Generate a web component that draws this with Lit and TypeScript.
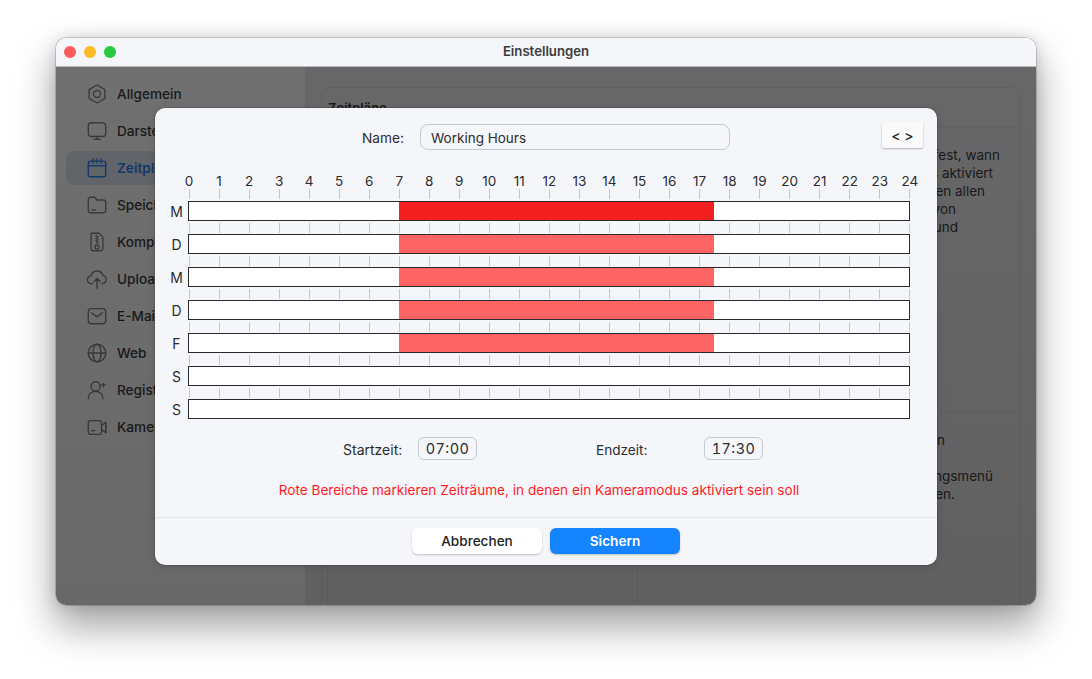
import { LitElement, html, css, svg } from "lit";
import { customElement } from "lit/decorators.js";

const ICONS: Record<string, unknown> = {
  general: svg`<path d="M12 2.2l8.6 5v9.6L12 21.8l-8.6-5V7.2z" stroke-linejoin="round"/><circle cx="12" cy="12" r="3.8"/>`,
  display: svg`<rect x="2.5" y="3" width="19" height="15" rx="3.5"/><path d="M12 18v3M8.5 21.2h7"/>`,
  calendar: svg`<rect x="2.5" y="4.5" width="19" height="17" rx="2.5"/><path d="M2.5 9.5h19M7.5 2v4.5M12 2v4.5M16.5 2v4.5"/>`,
  folder: svg`<path d="M2.5 6a2.5 2.5 0 012.5-2.5h4.5l2.5 3h7a2.5 2.5 0 012.5 2.5v9a2.5 2.5 0 01-2.5 2.5H5A2.5 2.5 0 012.5 18z"/><path d="M6.5 17.5h4"/>`,
  zip: svg`<path d="M6 2.5h8.5l4 4.5v12a2.5 2.5 0 01-2.5 2.5H8A2.5 2.5 0 015.5 19V3z" stroke-linejoin="round"/><path d="M11 5l2 1.5-2 1.5 2 1.5-2 1.5 2 1.5-1 1"/><rect x="10" y="15.5" width="4" height="4" rx="1"/>`,
  upload: svg`<path d="M7 17H6a4.2 4.2 0 01-.6-8.4A6.8 6.8 0 0118.5 8a4.6 4.6 0 01-.5 9h-1"/><path d="M12 22V11.5M8.5 15l3.5-3.5 3.5 3.5"/>`,
  mail: svg`<rect x="2.5" y="4" width="19" height="16.5" rx="3.5"/><path d="M6 8.5l6 4.5 6-4.5"/>`,
  web: svg`<circle cx="12" cy="12" r="9.6"/><ellipse cx="12" cy="12" rx="4.4" ry="9.6"/><path d="M2.4 12h19.2"/>`,
  user: svg`<circle cx="10.5" cy="8" r="5"/><path d="M2.5 21.5c0-5 3.2-8 8-8s7.5 3 8 8"/><path d="M19 4.5v4M17 6.5h4" stroke-width="1.4"/>`,
  camera: svg`<rect x="2.5" y="5" width="14.5" height="15" rx="2.5"/><path d="M17 10l4.5-3v11L17 15"/><path d="M6 16h3.5"/><path d="M21.5 7v11"/>`,
};

const NAV = [
  ["general", "Allgemein"],
  ["display", "Darstellung"],
  ["calendar", "Zeitpläne"],
  ["folder", "Speicher"],
  ["zip", "Komprimierung"],
  ["upload", "Uploads"],
  ["mail", "E-Mail"],
  ["web", "Web"],
  ["user", "Registrierung"],
  ["camera", "Kameras"],
];

const DAYS = [
  { d: "M", on: true, strong: true },
  { d: "D", on: true },
  { d: "M", on: true },
  { d: "D", on: true },
  { d: "F", on: true },
  { d: "S", on: false },
  { d: "S", on: false },
];

const HOURS = Array.from({ length: 25 }, (_, i) => i);

const COL_X = 638;
const INFO_A = [
  { t: "Ein Zeitplan legt pro Kalenderwoche fest, wann", end: 1000 },
  { t: "ein bestimmter Kameramodus aktiviert", end: 993 },
  { t: "sein soll. Er kann von ihnen allen", end: 985 },
  { t: "Kameras verwendet von", end: 956 },
  { t: "Bewegung und", end: 958 },
];
const INFO_B = [
  { t: "Einen neuen Zeitplan", end: 945 },
  { t: "\u00a0", end: 945 },
  { t: "Über das Bearbeitungsmenü", end: 993 },
  { t: "können Sie ihn bearbeiten.", end: 955 },
];

@customElement("app-root")
export class AppRoot extends LitElement {
  static styles = css`
    :host {
      display: block;
      width: 1092px;
      height: 679px;
      background: #fff;
      font-family: Inter, "Liberation Sans", sans-serif;
      color: #2c2c2e;
      font-size: 13.5px;
      overflow: hidden;
    }
    .page { padding: 38px 56px 0; }
    .window {
      position: relative;
      width: 980px;
      height: 567px;
      border-radius: 10px;
      overflow: hidden;
      box-shadow: 0 0 0 .5px rgba(0,0,0,.3), 0 20px 38px 2px rgba(0,0,0,.36), 0 0 14px rgba(0,0,0,.14);
      display: flex;
      flex-direction: column;
      background: #f5f6fa;
    }
    .title {
      height: 28px;
      box-sizing: content-box;
      flex: none;
      display: flex;
      align-items: center;
      justify-content: center;
      position: relative;
      background: #f5f6fa;
      border-bottom: 1px solid #b9b9bb;
      font-size: 13.2px;
      font-weight: 600;
      color: #3c3c3e;
    }
    .title span { position: relative; top: -1px; }
    .lights { position: absolute; left: 8px; top: 8px; display: flex; gap: 8px; }
    .light { width: 12px; height: 12px; border-radius: 50%; }
    .red { background: #fd5c5c; }
    .yellow { background: #fdb928; }
    .green { background: #27c93f; }
    .main { flex: 1; display: flex; min-height: 0; }
    .side {
      width: 250px;
      box-sizing: border-box;
      flex: none;
      padding: 10px 0 0 10px;
      background: #f6f6f6;
      border-right: 1px solid #dfe0e2;
      display: flex;
      flex-direction: column;
      gap: 3px;
    }
    .nav {
      height: 34px;
      width: 220px;
      flex: none;
      display: flex;
      align-items: center;
      gap: 9px;
      padding-left: 20px;
      border-radius: 8px;
      font-size: 13.6px;
      font-weight: 500;
      color: #3a3a3c;
      box-sizing: border-box;
    }
    .nav.sel { background: #d8deea; color: #2a80ec; font-weight: 600; }
    .nav svg { width: 22px; height: 22px; fill: none; stroke: #7f7f81; stroke-width: 1.5; stroke-linecap: round; flex: none; }
    .nav.sel svg { stroke: #2a80ec; }
    .right { flex: 1; padding: 20px 15px 0 15px; background: #e3e3e6; min-width: 0; }
    .card {
      height: 100%;
      box-sizing: border-box;
      border: 1px solid #d6d6da;
      border-bottom: 0;
      border-radius: 10px 10px 0 0;
      display: flex;
      flex-direction: column;
    }
    .card-head {
      height: 40px;
      flex: none;
      box-sizing: border-box;
      padding: 12px 0 0 6px;
      font-weight: 600;
      font-size: 13px;
      color: #3a3a3c;
      border-bottom: 1px solid #d6d6da;
    }
    .card-body { flex: 1; display: flex; padding: 0 4px 0 5px; min-height: 0; }
    .col-l { width: 311px; box-sizing: border-box; flex: none; border-left: 1px solid #d6d6da; border-right: 1px solid #d6d6da; }
    .col-r { flex: 1; font-size: 13.5px; line-height: 18px; color: #3a3a3c; white-space: nowrap; overflow: hidden; display: flex; flex-direction: column; }
    .block { padding-top: 18px; height: 284px; box-sizing: border-box; border-bottom: 1px solid #d6d6da; flex: none; }
    .block2 { padding-top: 19px; }
    .line { display: flex; justify-content: flex-end; height: 18px; }

    .dim {
      position: absolute;
      inset: 29px 0 0 0;
      background: linear-gradient(rgba(0,0,0,.545), rgba(0,0,0,.575));
    }
    .modal {
      position: absolute;
      left: 99px;
      top: 70px;
      width: 782px;
      height: 457px;
      box-sizing: border-box;
      background: #f5f6fa;
      border-radius: 10px;
      box-shadow: 0 0 0 .5px rgba(0,0,0,.25), 0 2px 8px rgba(0,0,0,.12);
      display: flex;
      flex-direction: column;
    }
    .name-row {
      height: 26px;
      margin-top: 16px;
      display: flex;
      align-items: center;
      padding-left: 207px;
      position: relative;
    }
    .name-row label { width: 58px; font-size: 13.7px; flex: none; padding-top: 1px; }
    .input {
      width: 310px;
      height: 26px;
      box-sizing: border-box;
      border: 1px solid #c5c9d2;
      border-radius: 8px;
      padding: 1px 0 0 10px;
      display: flex;
      align-items: center;
      font-size: 13.5px;
      color: #2c2c2e;
    }
    .nav-btn {
      position: absolute;
      left: 727px;
      top: -2px;
      width: 41px;
      height: 26px;
      background: #fafafb;
      border-radius: 2px;
      box-shadow: 0 1px 2px rgba(0,0,0,.28);
      display: flex;
      align-items: center;
      justify-content: center;
      font-size: 14px;
      font-weight: 500;
      color: #222;
    }
    .grid { margin-top: 22px; padding-left: 33px; width: 722px; }
    .ticks { display: flex; justify-content: space-between; width: 721px; }
    .hours { display: flex; height: 16px; margin-left: -14px; }
    .hour { width: 30.04px; flex: none; text-align: center; font-size: 13.5px; line-height: 16px; position: relative; top: 1px; }
    .ticks { height: 10px; margin: 0 0 2px 1px; }
    .ticks.top { margin-top: 1px; margin-bottom: 2px; }
    .tick { width: 1px; background: #c6c7cc; }
    .row { position: relative; height: 20px; }
    .day { position: absolute; left: -23px; width: 23px; box-sizing: border-box; text-align: center; top: 2px; font-size: 14px; line-height: 18px; }
    .bar { width: 722px; height: 20px; box-sizing: border-box; border: 1px solid #2a2a2c; background: #fff; display: flex; }
    .fill { height: 100%; }
    .fill.soft { background: #ff6464; }
    .fill.strong { background: #f42020; }
    .ticks.between { margin-top: 2px; margin-bottom: 1px; }
    .times { display: flex; align-items: center; height: 23px; margin-top: 18px; padding-left: 188px; }
    .times .lbl { flex: none; padding-top: 2px; }
    .lbl.start { width: 75px; font-size: 14px; }
    .lbl.end { width: 108px; margin-left: 119px; font-size: 13.6px; }
    .time {
      width: 59px;
      height: 23px;
      box-sizing: border-box;
      border: 1px solid #c5c9d2;
      border-radius: 6px;
      display: flex;
      align-items: center;
      justify-content: center;
      font-size: 14.5px;
      letter-spacing: .4px;
      font-feature-settings: "case", "tnum";
      flex: none;
    }
    .warn { margin-top: 21px; height: 18px; line-height: 18px; text-align: center; font-size: 13.6px; color: #ff1c1c; padding-right: 14px; }
    .foot {
      margin-top: auto;
      height: 48px;
      box-sizing: border-box;
      border-top: 1px solid #e2e4ee;
      display: flex;
      justify-content: center;
      gap: 8px;
      padding-top: 10px;
    }
    .btn {
      width: 130px;
      height: 26px;
      border-radius: 6px;
      display: flex;
      align-items: center;
      justify-content: center;
      font-size: 13.6px;
      font-weight: 500;
      box-shadow: 0 1px 2px rgba(0,0,0,.22);
      background: #fff;
      color: #222;
    }
    .btn.primary { background: #1684ff; color: #fff; font-weight: 600; }
  `;

  private ticks(cls: string) {
    return html`<div class="ticks ${cls}">${HOURS.map(() => html`<div class="tick"></div>`)}</div>`;
  }

  private lines(list: { t: string; end: number }[]) {
    return list.map((l) => html`<div class="line" style="width:${l.end - COL_X}px"><span>${l.t}</span></div>`);
  }

  render() {
    return html`<div class="page">
      <div class="window">
        <div class="title">
          <div class="lights"><div class="light red"></div><div class="light yellow"></div><div class="light green"></div></div>
          <span>Einstellungen</span>
        </div>
        <div class="main">
          <div class="side">
            ${NAV.map(([ic, label]) => html`<div class="nav ${ic === "calendar" ? "sel" : ""}">
              <svg viewBox="0 0 24 24">${ICONS[ic]}</svg><span>${label}</span>
            </div>`)}
          </div>
          <div class="right">
            <div class="card">
              <div class="card-head">Zeitpläne</div>
              <div class="card-body">
                <div class="col-l"></div>
                <div class="col-r">
                  <div class="block">${this.lines(INFO_A)}</div>
                  <div class="block2">${this.lines(INFO_B)}</div>
                </div>
              </div>
            </div>
          </div>
        </div>
        <div class="dim"></div>
        <div class="modal">
          <div class="name-row">
            <label>Name:</label>
            <div class="input">Working Hours</div>
            <div class="nav-btn">&lt; &gt;</div>
          </div>
          <div class="grid">
            <div class="hours">${HOURS.map((h) => html`<div class="hour">${h}</div>`)}</div>
            ${this.ticks("top")}
            ${DAYS.map((r, i) => html`
              <div class="row">
                <div class="day">${r.d}</div>
                <div class="bar">${r.on
                  ? html`<div class="fill ${r.strong ? "strong" : "soft"}" style="margin-left:${(7 / 24) * 100}%;width:${(10.5 / 24) * 100}%"></div>`
                  : ""}</div>
              </div>
              ${i < DAYS.length - 1 ? this.ticks("between") : ""}
            `)}
          </div>
          <div class="times">
            <div class="lbl start">Startzeit:</div>
            <div class="time">07:00</div>
            <div class="lbl end">Endzeit:</div>
            <div class="time">17:30</div>
          </div>
          <div class="warn">Rote Bereiche markieren Zeiträume, in denen ein Kameramodus aktiviert sein soll</div>
          <div class="foot">
            <div class="btn">Abbrechen</div>
            <div class="btn primary">Sichern</div>
          </div>
        </div>
      </div>
    </div>`;
  }
}
